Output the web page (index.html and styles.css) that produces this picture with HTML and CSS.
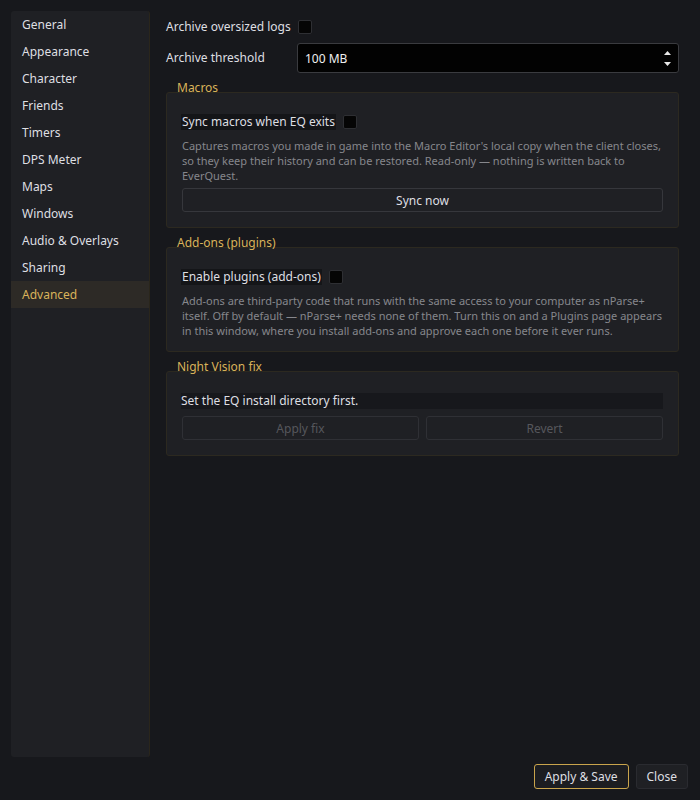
FILE: index.html
```html
<!DOCTYPE html>
<html lang="en">
<head>
  <meta charset="UTF-8">
  <title>Settings</title>
  <link rel="stylesheet" href="styles.css">
</head>
<body>
  <div class="window">
    <div class="content">
      <!-- Page list -->
      <ul class="sidebar">
        <li>General</li>
        <li>Appearance</li>
        <li>Character</li>
        <li>Friends</li>
        <li>Timers</li>
        <li>DPS Meter</li>
        <li>Maps</li>
        <li>Windows</li>
        <li>Audio &amp; Overlays</li>
        <li>Sharing</li>
        <li class="active">Advanced</li>
      </ul>

      <!-- Advanced page -->
      <div class="page">
        <div class="row">
          <span class="label">Archive oversized logs</span>
          <span class="check"></span>
        </div>
        <div class="row spin-row">
          <span class="label spin-label">Archive threshold</span>
          <div class="spinbox">
            <span>100 MB</span>
            <span class="arrows">
              <svg width="7" height="4" viewBox="0 0 7 4"><path d="M3.5 0 L7 4 L0 4 Z" fill="#e8e8e8"/></svg>
              <svg width="7" height="4" viewBox="0 0 7 4"><path d="M0 0 L7 0 L3.5 4 Z" fill="#e8e8e8"/></svg>
            </span>
          </div>
        </div>

        <div class="group">
          <div class="group-title">Macros</div>
          <div class="group-box">
            <div class="row">
              <span class="label boxed">Sync macros when EQ exits</span>
              <span class="check"></span>
            </div>
            <p class="desc">Captures macros you made in game into the Macro Editor's local copy when the client closes, so they keep their history and can be restored. Read-only — nothing is written back to EverQuest.</p>
            <button class="btn">Sync now</button>
          </div>
        </div>

        <div class="group">
          <div class="group-title">Add-ons (plugins)</div>
          <div class="group-box">
            <div class="row">
              <span class="label boxed">Enable plugins (add-ons)</span>
              <span class="check"></span>
            </div>
            <p class="desc desc-last">Add-ons are third-party code that runs with the same access to your computer as nParse+ itself. Off by default — nParse+ needs none of them. Turn this on and a Plugins page appears in this window, where you install add-ons and approve each one before it ever runs.</p>
          </div>
        </div>

        <div class="group">
          <div class="group-title">Night Vision fix</div>
          <div class="group-box">
            <div class="info">Set the EQ install directory first.</div>
            <div class="btn-pair">
              <button class="btn" disabled>Apply fix</button>
              <button class="btn" disabled>Revert</button>
            </div>
          </div>
        </div>
      </div>
    </div>

    <div class="footer">
      <button class="btn btn-primary">Apply &amp; Save</button>
      <button class="btn btn-close">Close</button>
    </div>
  </div>
</body>
</html>
```

FILE: styles.css
```css
/* General */
* {
  box-sizing: border-box;
}

body {
  margin: 0;
  background-color: #17181c;
  color: #dedfe2;
  font-family: "Noto Sans", "Open Sans", sans-serif;
  font-size: 12px;
}

.window {
  display: flex;
  flex-direction: column;
  height: 100vh;
  padding: 11px 12px 11px 11px;
}

.content {
  flex: 1;
  display: flex;
  gap: 16px;
  min-height: 0;
}

/* Sidebar */
.sidebar {
  width: 139px;
  margin: 0;
  padding: 0;
  list-style: none;
  background-color: #1f2024;
  border-right: 1px solid #2a261b;
  border-radius: 3px;
}

.sidebar li {
  height: 27px;
  line-height: 27px;
  padding-left: 11px;
  color: #dedfe2;
}

.sidebar li.active {
  background-color: #2d2a26;
  color: #d9b35a;
}

/* Page */
.page {
  flex: 1;
  padding: 8px 9px 0 0;
}

.row {
  display: flex;
  align-items: center;
  height: 16px;
}

.label {
  line-height: 16px;
}

.boxed {
  background-color: #141518;
  padding: 0 1px;
  margin-left: -1px;
}

.check {
  width: 14px;
  height: 14px;
  margin-left: 7px;
  background-color: #050505;
  border: 1px solid #2e2f33;
  border-radius: 2px;
}

.spin-row {
  height: 30px;
  margin-top: 8px;
}

.spin-label {
  width: 131px;
}

.spinbox {
  flex: 1;
  height: 30px;
  display: flex;
  align-items: center;
  justify-content: space-between;
  padding: 0 7px 0 7px;
  background-color: #020202;
  border: 1px solid #3a3b3f;
  border-radius: 3px;
  color: #f0f0f0;
}

.arrows {
  display: flex;
  flex-direction: column;
  gap: 7px;
}

.arrows svg {
  display: block;
}

/* Group boxes */
.group-title {
  height: 19px;
  padding: 7px 0 0 11px;
  line-height: 16px;
  color: #d9b35a;
}

.group-box {
  padding: 21px 15px 15px 15px;
  background-color: #1f2024;
  border: 1px solid #2c2920;
  border-radius: 3px;
}

.desc {
  margin: 8px -6px 5px 0;
  font-size: 11px;
  line-height: 15px;
  color: #86878c;
}

.desc-last {
  margin-bottom: -2px;
}

.info {
  height: 16px;
  line-height: 16px;
  padding-left: 0;
  margin-left: -1px;
  background-color: #17181c;
}

.btn-pair {
  display: flex;
  gap: 7px;
  margin-top: 7px;
}

.btn-pair .btn {
  flex: 1;
}

/* Buttons */
.btn {
  display: block;
  width: 100%;
  height: 24px;
  padding: 0;
  background-color: #1f2024;
  border: 1px solid #36373c;
  border-radius: 3px;
  color: #dedfe2;
  font-family: inherit;
  font-size: 12px;
}

.btn:disabled {
  color: #56575c;
  border-color: #2f3035;
}

.footer {
  display: flex;
  justify-content: flex-end;
  gap: 7px;
  margin-top: 7px;
}

.footer .btn {
  width: auto;
  height: 25px;
}

.btn-primary {
  padding: 0 10px;
  border-color: #c9a44c;
  background-color: #1c1d21;
}

.btn-close {
  padding: 0 10px;
  border-color: #2a2b30;
}
```
